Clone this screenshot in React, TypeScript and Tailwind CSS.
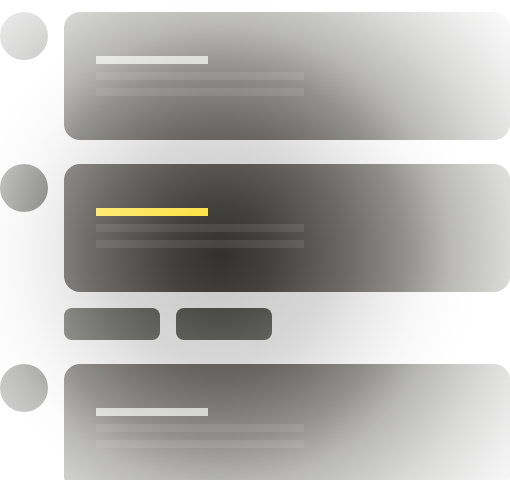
const rows = [
  { id: "one", accent: false, actions: false },
  { id: "two", accent: true, actions: true },
  { id: "three", accent: false, actions: false },
];

function SkeletonCard({ accent }: { accent: boolean }) {
  return (
    <div className="flex h-32 flex-col gap-2 rounded-2xl bg-[#32312e] px-8 py-[44px]">
      <div className={`h-2 w-28 ${accent ? "bg-[#fde23f]" : "bg-[#bdbdba]"}`} />
      <div className="h-2 w-52 bg-white/[0.09]" />
      <div className="h-2 w-52 bg-white/[0.09]" />
    </div>
  );
}

export default function App() {
  return (
    <div className="relative h-[480px] w-[510px] overflow-hidden bg-[radial-gradient(circle_at_220px_255px,#c8c8c8_0px,#cccccc_110px,#eeeeee_200px,#ffffff_260px)] pt-3 font-['Inter',sans-serif]">
      <div className="flex flex-col gap-6">
        {rows.map((row) => (
          <div key={row.id} className="flex gap-4">
            <div className="h-12 w-12 shrink-0 rounded-full bg-[#3a3a38]" />
            <div className="flex flex-1 flex-col gap-4">
              <SkeletonCard accent={row.accent} />
              {row.actions && (
                <div className="flex gap-4">
                  <div className="h-8 w-24 rounded-lg bg-[#383835]" />
                  <div className="h-8 w-24 rounded-lg bg-[#383835]" />
                </div>
              )}
            </div>
          </div>
        ))}
      </div>

      {/* spotlight fade */}
      <div className="pointer-events-none absolute inset-0 bg-[radial-gradient(circle_at_220px_255px,rgba(255,255,255,0)_0px,rgba(255,255,255,0.08)_50px,rgba(255,255,255,0.27)_125px,rgba(255,255,255,0.46)_185px,rgba(255,255,255,0.66)_230px,rgba(255,255,255,0.82)_290px,rgba(255,255,255,0.92)_340px,rgba(255,255,255,1)_390px)]" />
    </div>
  );
}
